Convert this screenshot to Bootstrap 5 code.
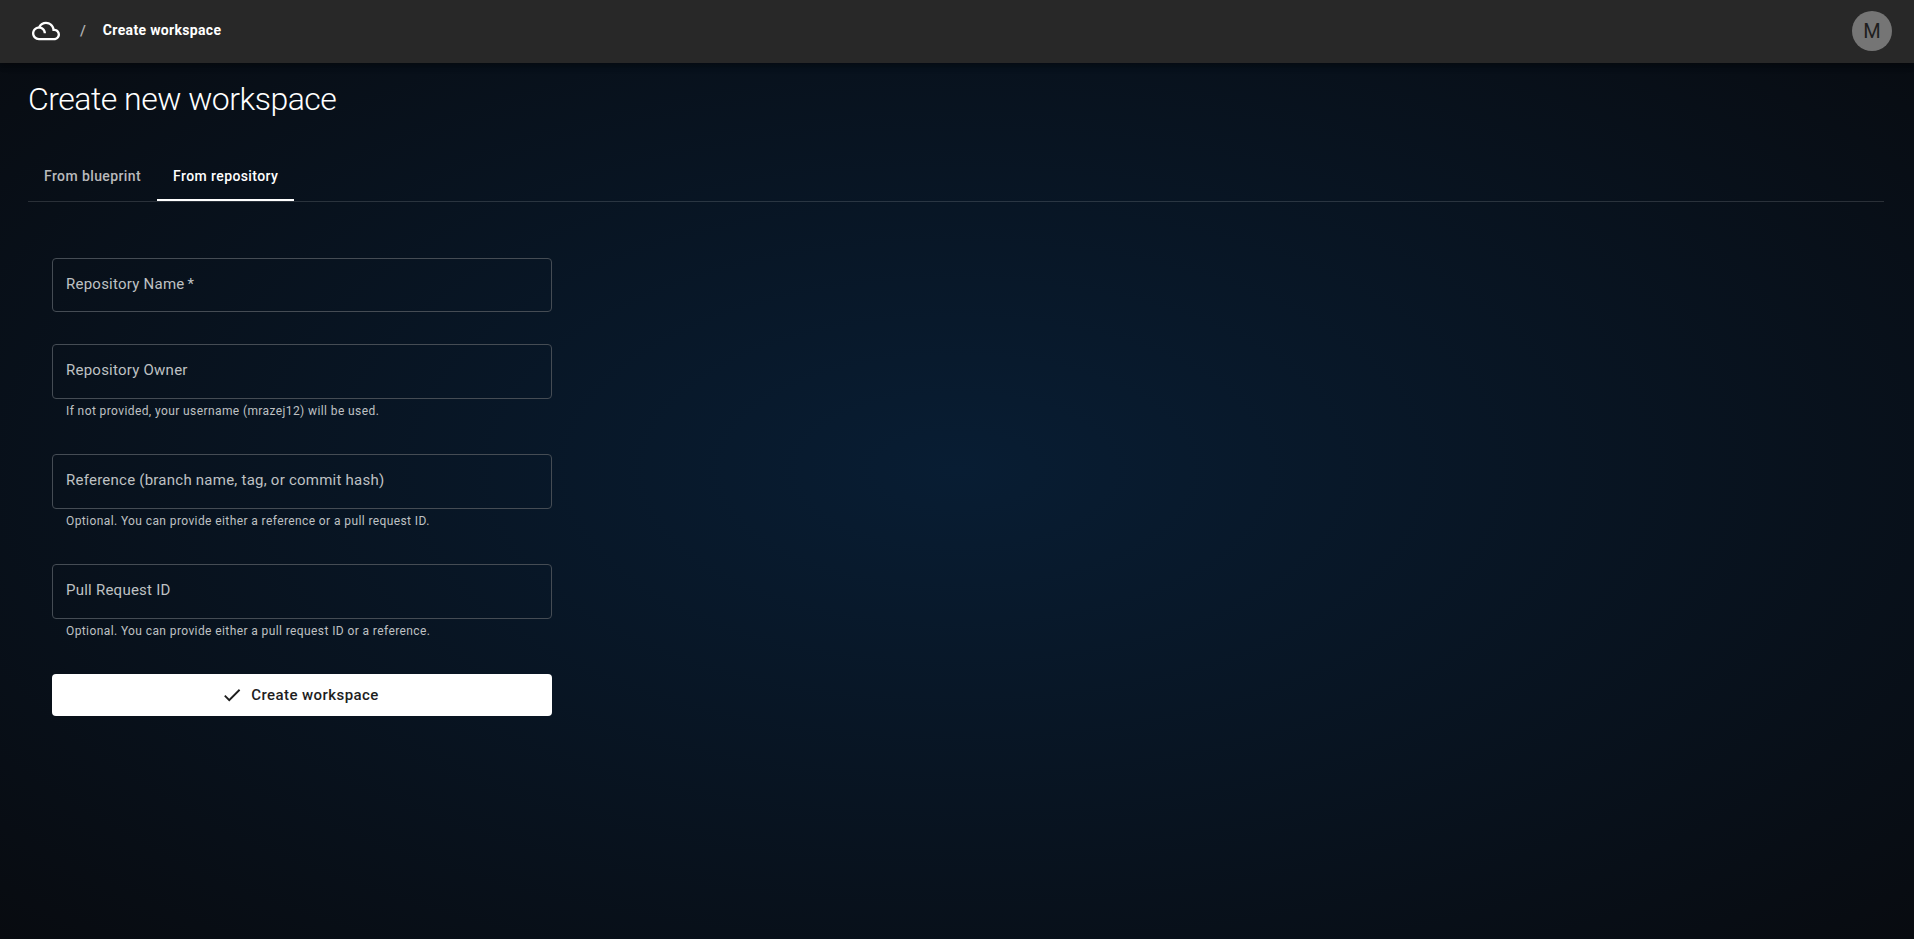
<!DOCTYPE html>
<html lang="en" data-bs-theme="dark">
<head>
<meta charset="utf-8">
<meta name="viewport" content="width=device-width, initial-scale=1">
<title>Create workspace</title>
<link href="https://cdn.jsdelivr.net/npm/bootstrap@5.3.0/dist/css/bootstrap.min.css" rel="stylesheet">
<style>
body{font-family:Roboto,"Liberation Sans",sans-serif;min-height:100vh;color:#fff;background:#080b10 radial-gradient(ellipse farthest-corner at center,#081d33 0%,#080b10 100%) no-repeat}
.topbar{height:63px;background:#282828;padding:0 22px 1px 32px;box-shadow:0 2px 4px -1px rgba(0,0,0,.2),0 4px 5px rgba(0,0,0,.14),0 1px 10px rgba(0,0,0,.12)}
.crumb-sep{margin:0 17px 0 20px;font-size:15px;line-height:20px;font-weight:500;color:#b0b0b0}
.crumb-text{font-size:14px;line-height:20px;font-weight:700;letter-spacing:.33px;padding-bottom:2px}
.user-avatar{width:40px;height:40px;background:#757575;color:#1e1e1e;font-size:20px;line-height:20px}
main{padding:16px 30px 0 28px}
.page-title{font-size:32px;line-height:40px;font-weight:300;margin:0;letter-spacing:-.5px}
.nav-tabs{--bs-nav-tabs-border-color:rgba(255,255,255,.14);margin-top:33px}
.nav-tabs .nav-link{border:0;border-bottom:2px solid transparent;border-radius:0;margin:0;padding:14px 16px 15px;height:49px;font-size:14px;line-height:20px;font-weight:500;letter-spacing:.4px;color:#b9babc;background:none}
.nav-tabs .nav-link.active{color:#fff;border-color:#fff;background:none}
.repo-form{width:500px;margin:56px 0 0 24px}
.field-box{border:1px solid #454c54;border-radius:4px;height:55px;padding:14px 13px;font-size:15px;line-height:22px;letter-spacing:.24px;color:#bfc1c3}
.field-first{height:54px}
.required-mark{margin-left:-1px}
.hint-text{font-size:12px;line-height:20px;height:23px;padding:2px 14px 0;color:#bfc1c3;letter-spacing:.4px}
.btn-create{height:42px;border-radius:4px;background:#fff;color:#1e1e1e;font-size:15px;line-height:24px;font-weight:500;letter-spacing:.42px;padding-right:16px}
.btn-create:hover{background:#e6e6e6;color:#1e1e1e}
</style>
</head>
<body>
<header class="topbar d-flex align-items-center">
<svg width="28" height="28" viewBox="0 0 24 24" fill="#fff" aria-hidden="true"><path d="M19.35 10.04C18.67 6.59 15.64 4 12 4 9.11 4 6.61 5.64 5.36 8.04 2.35 8.36 0 10.9 0 14c0 3.31 2.69 6 6 6h13c2.76 0 5-2.24 5-5 0-2.64-2.05-4.78-4.65-4.96zM19 18H6c-2.21 0-4-1.79-4-4s1.79-4 4-4 4 1.79 4 4h2c0-2.76-1.86-5.08-4.4-5.78C8.61 6.88 10.2 6 12 6c3.03 0 5.5 2.47 5.5 5.5v.5H19c1.65 0 3 1.35 3 3s-1.35 3-3 3z"/></svg>
<span class="crumb-sep">/</span><span class="crumb-text">Create workspace</span>
<div class="user-avatar rounded-circle d-flex align-items-center justify-content-center ms-auto">M</div>
</header>
<main>
<h1 class="page-title">Create new workspace</h1>
<ul class="nav nav-tabs">
<li class="nav-item"><a class="nav-link" href="#">From blueprint</a></li>
<li class="nav-item"><a class="nav-link active" href="#">From repository</a></li>
</ul>
<form class="repo-form d-flex flex-column">
<div class="mb-4 pb-2"><div class="field-box field-first">Repository Name<span class="required-mark"> *</span></div></div>
<div class="mb-4 pb-2"><div class="field-box">Repository Owner</div><div class="hint-text">If not provided, your username (mrazej12) will be used.</div></div>
<div class="mb-4 pb-2"><div class="field-box">Reference (branch name, tag, or commit hash)</div><div class="hint-text">Optional. You can provide either a reference or a pull request ID.</div></div>
<div class="mb-4 pb-2"><div class="field-box">Pull Request ID</div><div class="hint-text">Optional. You can provide either a pull request ID or a reference.</div></div>
<button type="button" class="btn btn-create d-flex align-items-center justify-content-center"><svg class="me-2" width="22" height="22" viewBox="0 0 24 24" fill="currentColor" aria-hidden="true"><path d="M9 16.17 4.83 12l-1.42 1.41L9 19 21 7l-1.41-1.41z"/></svg>Create workspace</button>
</form>
</main>
<script src="https://cdn.jsdelivr.net/npm/bootstrap@5.3.0/dist/js/bootstrap.bundle.min.js"></script>
</body>
</html>
